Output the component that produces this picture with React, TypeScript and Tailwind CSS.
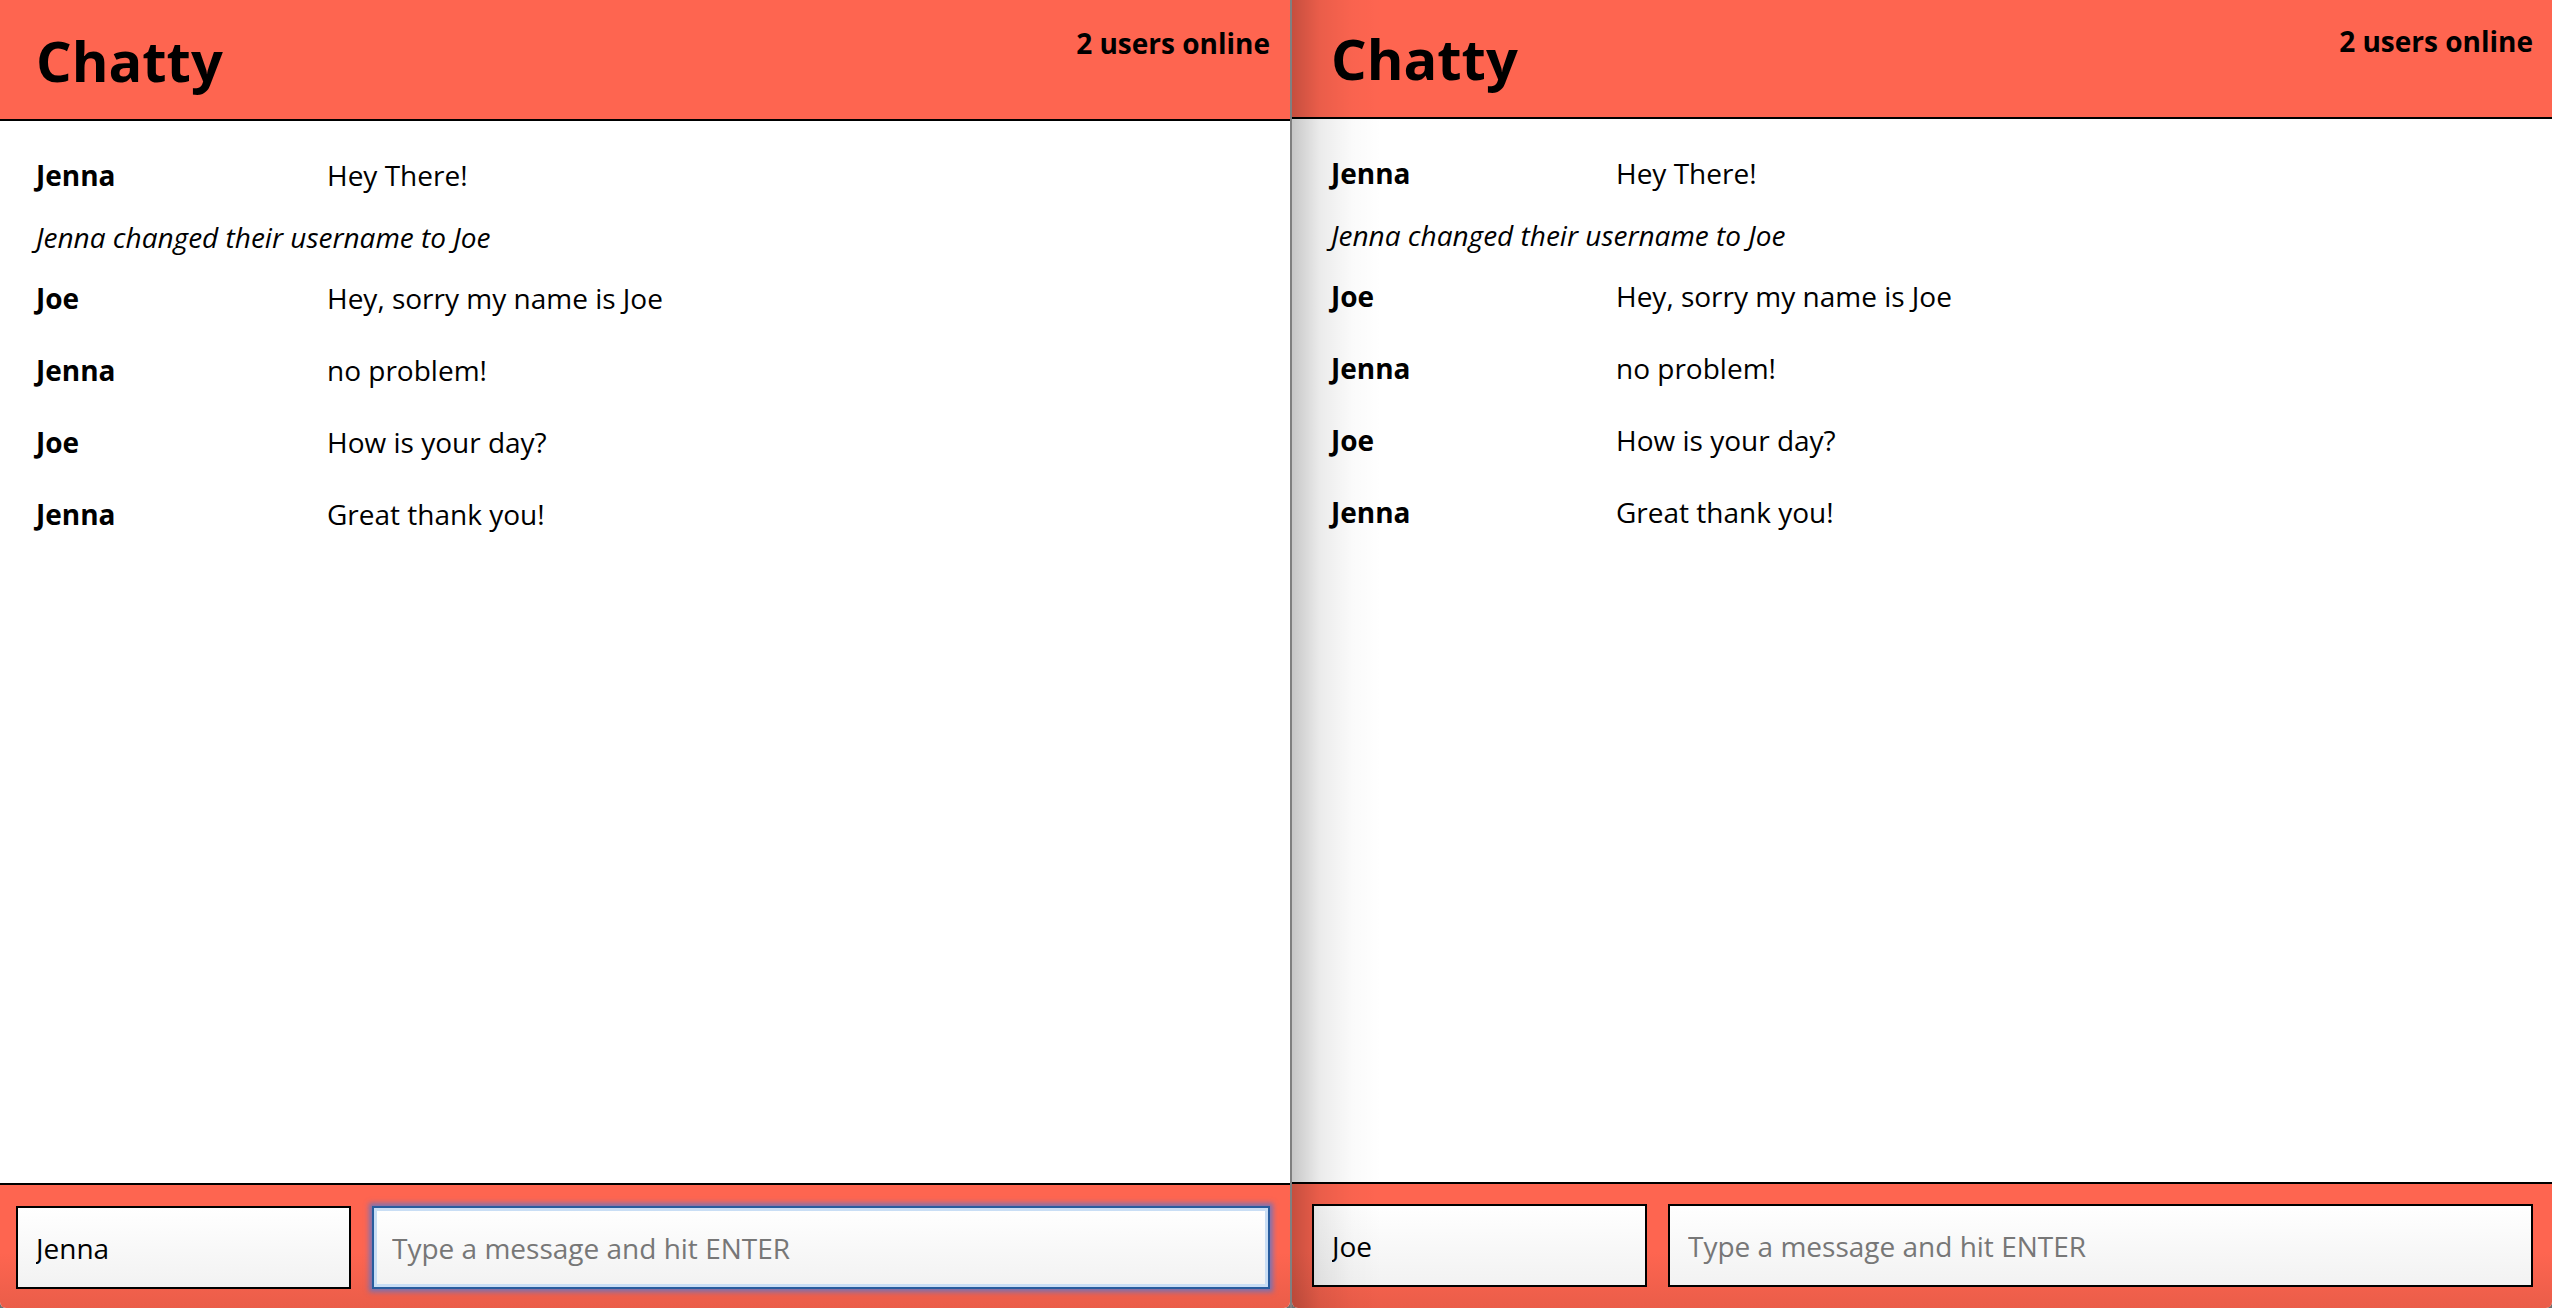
import React from "react";

type Item = { kind: "msg"; name: string; text: string } | { kind: "note"; text: string };

const items: Item[] = [
  { kind: "msg", name: "Jenna", text: "Hey There!" },
  { kind: "note", text: "Jenna changed their username to Joe" },
  { kind: "msg", name: "Joe", text: "Hey, sorry my name is Joe" },
  { kind: "msg", name: "Jenna", text: "no problem!" },
  { kind: "msg", name: "Joe", text: "How is your day?" },
  { kind: "msg", name: "Jenna", text: "Great thank you!" },
];

function Window({ right }: { right: boolean }) {
  return (
    <div
      className={
        right
          ? "relative flex h-[1308px] w-[1260px] flex-col overflow-hidden rounded-b-[6px] bg-white"
          : "relative flex h-[1308px] w-[1290px] flex-col overflow-hidden rounded-b-[6px] bg-white"
      }
    >
      <header
        className={
          right
            ? "flex h-[119px] shrink-0 items-start justify-between border-b-2 border-black bg-[#fe6550]"
            : "flex h-[121px] shrink-0 items-start justify-between border-b-2 border-black bg-[#fe6550]"
        }
      >
        <h1
          className={
            right
              ? "pl-[39px] pt-[20px] text-[56px] font-bold leading-[76px] text-black"
              : "pl-[36px] pt-[22px] text-[56px] font-bold leading-[76px] text-black"
          }
        >
          Chatty
        </h1>
        <div
          className={
            right
              ? "pr-[19px] pt-[22px] text-[28px] font-bold leading-[38px] text-black"
              : "pr-[20px] pt-[24px] text-[28px] font-bold leading-[38px] text-black"
          }
        >
          2 users online
        </div>
      </header>

      <main className={right ? "flex-1 pl-[39px] pt-[18px]" : "flex-1 pl-[36px] pt-[18px]"}>
        {items.map((it, i) =>
          it.kind === "msg" ? (
            <div key={i} className="flex py-[16px] text-[28px] leading-[40px] text-black">
              <span className={right ? "w-[285px] shrink-0 font-bold" : "w-[291px] shrink-0 font-bold"}>
                {it.name}
              </span>
              <span>{it.text}</span>
            </div>
          ) : (
            <div key={i} className="pb-[5px] pt-[6px] text-[28px] italic leading-[40px] text-black">
              {it.text}
            </div>
          )
        )}
      </main>

      <footer
        className={
          right
            ? "flex h-[126px] shrink-0 items-start gap-[21px] border-t-2 border-black bg-[linear-gradient(to_bottom,#fe6550_55%,#ea5d49)] pl-[20px] pr-[19px] pt-[20px]"
            : "flex h-[125px] shrink-0 items-start gap-[21px] border-t-2 border-black bg-[linear-gradient(to_bottom,#fe6550_55%,#ea5d49)] pl-[16px] pr-[20px] pt-[21px]"
        }
      >
        <input
          readOnly
          defaultValue={right ? "Joe" : "Jenna"}
          className="h-[83px] w-[335px] shrink-0 border-2 border-black bg-[linear-gradient(to_bottom,#ffffff,#f2f2f2)] pl-[18px] text-[28px] text-black outline-none"
        />
        <input
          readOnly
          placeholder="Type a message and hit ENTER"
          className={
            right
              ? "h-[83px] min-w-0 flex-1 border-2 border-black bg-[linear-gradient(to_bottom,#ffffff,#f2f2f2)] pl-[18px] text-[28px] text-black outline-none placeholder:text-[#777777]"
              : "h-[83px] min-w-0 flex-1 border-2 border-[#285c9e] bg-[linear-gradient(to_bottom,#ffffff,#f2f2f2)] pl-[18px] text-[28px] text-black shadow-[0_0_5px_3px_rgba(70,120,220,0.7),inset_0_0_0_3px_#c9def5] outline-none placeholder:text-[#777777]"
          }
        />
      </footer>

      {right && (
        <div className="pointer-events-none absolute bottom-0 left-0 top-0 w-[90px] bg-[linear-gradient(to_right,rgba(0,0,0,0.22),rgba(0,0,0,0.08)_28px,rgba(0,0,0,0.02)_60px,transparent_90px)]" />
      )}
    </div>
  );
}

export default function App() {
  return (
    <div className="flex h-[1308px] w-[2552px] overflow-hidden bg-[#6f6f6f] font-['Open_Sans','Liberation_Sans',sans-serif]">
      <Window right={false} />
      <div className="h-[1308px] w-[2px] shrink-0 bg-[#808080]" />
      <Window right={true} />
    </div>
  );
}
